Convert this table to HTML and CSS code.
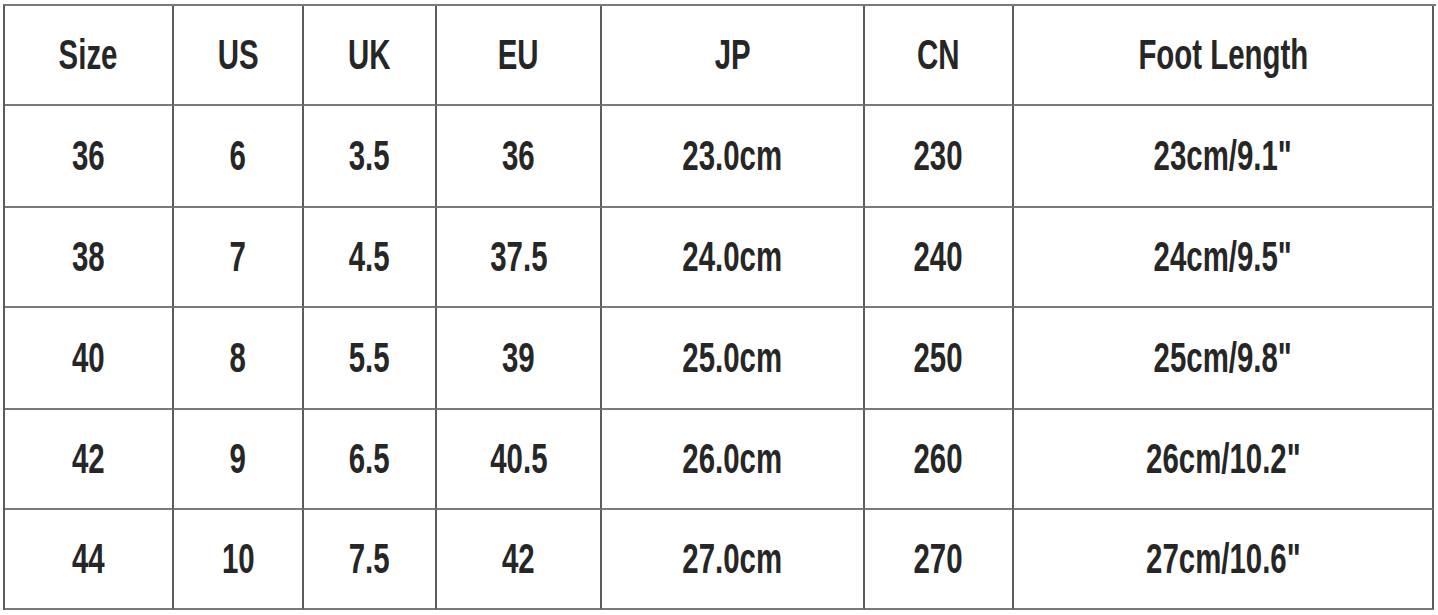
FILE: index.html
```html
<!DOCTYPE html>
<html>
<head>
<meta charset="utf-8">
<link rel="stylesheet" href="styles.css">
</head>
<body>
<div class="chart">
  <div class="row r1">
    <div class="cell"><span>Size</span></div><div class="cell"><span>US</span></div><div class="cell"><span>UK</span></div><div class="cell"><span>EU</span></div><div class="cell"><span>JP</span></div><div class="cell"><span>CN</span></div><div class="cell"><span>Foot Length</span></div>
  </div>
  <div class="row r2">
    <div class="cell"><span>36</span></div><div class="cell"><span>6</span></div><div class="cell"><span>3.5</span></div><div class="cell"><span>36</span></div><div class="cell"><span>23.0cm</span></div><div class="cell"><span>230</span></div><div class="cell"><span>23cm/9.1"</span></div>
  </div>
  <div class="row r1">
    <div class="cell"><span>38</span></div><div class="cell"><span>7</span></div><div class="cell"><span>4.5</span></div><div class="cell"><span>37.5</span></div><div class="cell"><span>24.0cm</span></div><div class="cell"><span>240</span></div><div class="cell"><span>24cm/9.5"</span></div>
  </div>
  <div class="row r2">
    <div class="cell"><span>40</span></div><div class="cell"><span>8</span></div><div class="cell"><span>5.5</span></div><div class="cell"><span>39</span></div><div class="cell"><span>25.0cm</span></div><div class="cell"><span>250</span></div><div class="cell"><span>25cm/9.8"</span></div>
  </div>
  <div class="row r1">
    <div class="cell"><span>42</span></div><div class="cell"><span>9</span></div><div class="cell"><span>6.5</span></div><div class="cell"><span>40.5</span></div><div class="cell"><span>26.0cm</span></div><div class="cell"><span>260</span></div><div class="cell"><span>26cm/10.2"</span></div>
  </div>
  <div class="row r1">
    <div class="cell"><span>44</span></div><div class="cell"><span>10</span></div><div class="cell"><span>7.5</span></div><div class="cell"><span>42</span></div><div class="cell"><span>27.0cm</span></div><div class="cell"><span>270</span></div><div class="cell"><span>27cm/10.6"</span></div>
  </div>
</div>
</body>
</html>
```

FILE: styles.css
```css
html, body {
  margin: 0;
  padding: 0;
  background: #ffffff;
}
body {
  font-family: "Liberation Sans", Arial, sans-serif;
  color: #262626;
}
.chart {
  margin: 4px 0 0 3px;
  width: 1431px;
  border-left: 2px solid #5c5c5c;
  border-top: 2px solid #7a7a7a;
}
.row {
  display: grid;
  grid-template-columns: 169px 130px 133px 165px 263px 149px 420px;
}
.r1 { height: 100px; }
.r2 { height: 102px; }
.cell {
  box-sizing: border-box;
  border-right: 2px solid #5c5c5c;
  border-bottom: 2px solid #7a7a7a;
  display: flex;
  align-items: center;
  justify-content: center;
  font-size: 42px;
  font-weight: bold;
  white-space: nowrap;
}
.cell span {
  display: inline-block;
  transform: scaleX(0.7);
}
```
